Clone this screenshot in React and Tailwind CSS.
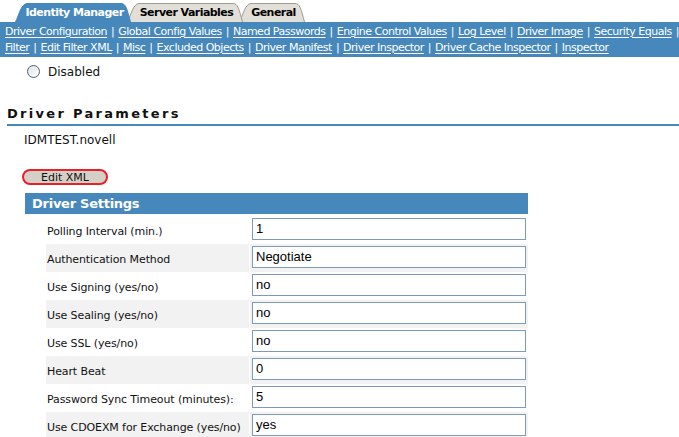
import React from 'react'

const blue = 'bg-[#4688bb]'

const line1 = ['Driver Configuration', 'Global Config Values', 'Named Passwords', 'Engine Control Values', 'Log Level', 'Driver Image', 'Security Equals']
const line2 = ['Filter', 'Edit Filter XML', 'Misc', 'Excluded Objects', 'Driver Manifest', 'Driver Inspector', 'Driver Cache Inspector', 'Inspector']

const settings = [
  ['Polling Interval (min.)', '1'],
  ['Authentication Method', 'Negotiate'],
  ['Use Signing (yes/no)', 'no'],
  ['Use Sealing (yes/no)', 'no'],
  ['Use SSL (yes/no)', 'no'],
  ['Heart Beat', '0'],
  ['Password Sync Timeout (minutes):', '5'],
  ['Use CDOEXM for Exchange (yes/no)', 'yes'],
]

function Tab({ label, active, width, className }) {
  const fill = active ? '#4688bb' : '#e2dfd8'
  const stroke = active ? '#4688bb' : '#9f9b93'
  const w = width
  return (
    <div className={`relative flex h-[19px] items-center justify-center pl-[3px] ${className}`} style={{ width: w }}>
      <svg className="absolute inset-0" width={w} height="19" viewBox={`0 0 ${w} 19`}>
        <path
          d={`M0.5 19 C4 12 6 1 12 0.5 L${w - 10} 0.5 C${w - 5} 0.5 ${w - 4} 6 ${w - 0.5} 19`}
          fill={fill}
          stroke={stroke}
        />
      </svg>
      <span className={`relative whitespace-nowrap pt-[1px] text-[11px] font-bold tracking-[-0.05em] ${active ? 'text-white' : 'text-black'}`}>{label}</span>
    </div>
  )
}

function LinkLine({ items, last }) {
  return (
    <div className="flex h-[16px] items-center whitespace-nowrap">
      {items.map((t, i) => (
        <React.Fragment key={t}>
          <a className="text-white underline decoration-1 underline-offset-2">{t}</a>
          {(i < items.length - 1 || last) && <span className="mx-[4px] text-white">|</span>}
        </React.Fragment>
      ))}
    </div>
  )
}

export default function App() {
  return (
    <div className="h-[437px] w-[679px] overflow-hidden bg-white text-[#111] font-['DejaVu_Sans',sans-serif] text-[11px]">
      <div className="flex h-[22px] items-end pl-[15px] pt-[3px]">
        <Tab label="Identity Manager" active width={116} className="z-30" />
        <Tab label="Server Variables" width={116} className="z-20 -ml-[4px]" />
        <Tab label="General" width={66} className="z-10 -ml-[4px]" />
      </div>
      <div className={`${blue} h-[35px] px-[5px] pt-[2px] tracking-[-0.045em]`}>
        <LinkLine items={line1} last />
        <LinkLine items={line2} />
      </div>

      <div className="flex h-[28px] items-center pl-[27px] pt-[1px]">
        <span className="h-[13px] w-[13px] rounded-full border border-[#4b5d73] bg-gradient-to-br from-[#dfe4ea] to-white"></span>
        <span className="ml-[8px] text-[12px]">Disabled</span>
      </div>

      <div className="mt-[21px] ml-[7px] border-b-2 border-[#4688bb] pb-[2px]">
        <div className="text-[13px] font-bold tracking-[2.3px] leading-[16px]">Driver Parameters</div>
      </div>

      <div className="ml-[24px] mt-[6px] text-[12px] leading-[16px]">IDMTEST.novell</div>

      <div className="ml-[22px] mt-[21px] flex h-[16px] w-[86px] items-center justify-center rounded-full border-2 border-[#e8202a] bg-[#d4d0c8] text-[11px] leading-none">
        Edit XML
      </div>

      <div className="ml-[25px] mt-[8px] w-[503px]">
        <div className={`${blue} flex h-[21px] items-center pl-[7px] text-[13px] font-bold tracking-[-0.02em] text-white`}>Driver Settings</div>
        <div className="mt-[2px] pl-[21px]">
          {settings.map(([label, value], i) => (
            <div key={label} className={`flex h-[28px] ${i % 2 === 1 ? 'bg-[#f2f2f2]' : ''}`}>
              <div className="flex w-[203px] items-end pb-[4px] pl-[1px] text-[11px] tracking-[-0.01em]">{label}</div>
              <div className="w-[1px] bg-white"></div>
              <div className="flex flex-1 items-start pl-[2px] pt-[2px]">
                <div className="flex h-[22px] w-[274px] items-center border border-[#7d9bb8] bg-white px-[3px] font-['Liberation_Sans',sans-serif] text-[13px] text-black">
                  {value}
                </div>
              </div>
            </div>
          ))}
        </div>
      </div>
    </div>
  )
}
